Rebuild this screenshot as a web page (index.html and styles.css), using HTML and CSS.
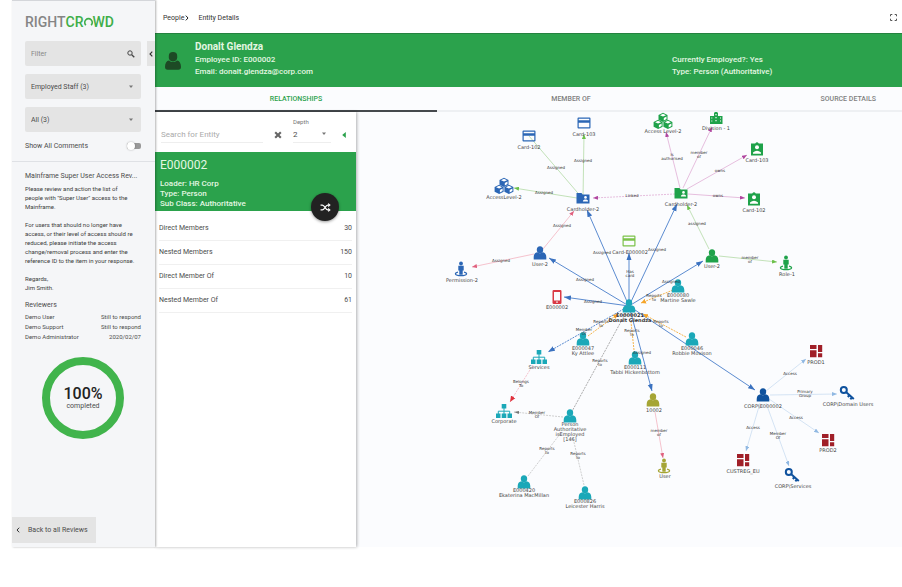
FILE: index.html
```html
<!DOCTYPE html>
<html lang="en">
<head>
    <meta charset="UTF-8">
    <meta name="viewport" content="width=device-width, initial-scale=1.0">
    <title>RightCrowd - Entity Details</title>
    <link rel="stylesheet" href="styles.css">
</head>
<body>
    <div id="app">
        <aside class="sidebar">
            <button class="collapse-btn" aria-label="Collapse sidebar">
                <svg width="4" height="6" viewBox="0 0 4 6"><path d="M3.3 .6L1 3l2.3 2.4" fill="none" stroke="#333" stroke-width="1.1"/></svg>
            </button>
            <div class="sidebar-top">
                <div class="logo">
                    <span class="logo-gray">RIGHT</span><span class="logo-green">CR</span><svg width="9" height="11" viewBox="0 0 9 11" aria-hidden="true"><path d="M1.800 8.200A3.700 3.900 0 1 1 7.200 8.200" fill="none" stroke="#3fae49" stroke-width="1.7"/></svg><span class="logo-green">WD</span>
                </div>
                <div class="field">
                    <input type="text" id="filter" placeholder="Filter" aria-label="Filter">
                    <svg width="8" height="8" viewBox="0 0 8 8"><circle cx="3" cy="3" r="2.2" fill="none" stroke="#444" stroke-width="1"/><path d="M4.7 4.7L7.3 7.3" stroke="#444" stroke-width="1.3"/></svg>
                </div>
                <div class="field">
                    <select id="staff" aria-label="Staff"><option>Employed Staff (3)</option></select>
                    <svg width="8" height="4" viewBox="0 0 8 4"><path d="M2 0.5h4L4 3z" fill="#777"/></svg>
                </div>
                <div class="field">
                    <select id="all" aria-label="Items"><option>All (3)</option></select>
                    <svg width="8" height="4" viewBox="0 0 8 4"><path d="M2 0.5h4L4 3z" fill="#777"/></svg>
                </div>
                <div class="toggle-row">
                    <label for="comments">Show All Comments</label>
                    <input type="checkbox" id="comments">
                </div>
            </div>
            <div class="review">
                <h2>Mainframe Super User Access Rev...</h2>
                <p>Please review and action the list of<br>people with "Super User" access to the<br>Mainframe.</p>
                <p>For users that should no longer have<br>access, or their level of access should re<br>reduced, please initiate the access<br>change/removal process and enter the<br>reference ID to the item in your response.</p>
                <p>Regards,<br>Jim Smith.</p>
                <h3>Reviewers</h3>
                <table class="reviewers">
                    <tr><td>Demo User</td><td>Still to respond</td></tr>
                    <tr><td>Demo Support</td><td>Still to respond</td></tr>
                    <tr><td>Demo Administrator</td><td>2020/02/07</td></tr>
                </table>
                <div class="progress">
                    <strong>100%</strong>
                    <span>completed</span>
                </div>
            </div>
            <button class="back-btn">
                <svg width="4" height="6" viewBox="0 0 4 6"><path d="M3.2 .7L1 3l2.2 2.3" fill="none" stroke="#333" stroke-width="1"/></svg>
                Back to all Reviews
            </button>
        </aside>

        <main>
            <nav class="breadcrumb">
                <a href="#">People</a>
                <svg width="4" height="6" viewBox="0 0 4 6"><path d="M.8 .6L3 3L.8 5.4" fill="none" stroke="#222" stroke-width="1"/></svg>
                <span>Entity Details</span>
                <button class="fullscreen-btn" aria-label="Full screen">
                    <svg width="7" height="7" viewBox="0 0 7 7"><path d="M.5 2.3V.5h1.8M4.7 .5h1.8v1.8M6.5 4.7v1.8H4.7M2.3 6.5H.5V4.7" fill="none" stroke="#555"/></svg>
                </button>
            </nav>

            <header class="entity-header">
                <svg width="16" height="18" viewBox="0 0 16 18" fill="#1d4a25"><rect x="3.8" y="0" width="8.4" height="9.4" rx="4.1"/><path d="M0 15c0-4 1.500-6.300 4-6.600 2.400 2 5.600 2 8 0 2.500.3 4 2.600 4 6.600 0 1.700-1 2.700-2.600 2.700H2.600C1 17.700 0 16.700 0 15z"/></svg>
                <div class="entity-main">
                    <h1>Donalt Glendza</h1>
                    <p>Employee ID: E000002</p>
                    <p>Email: donalt.glendza@corp.com</p>
                </div>
                <div class="entity-side">
                    <p>Currently Employed?: Yes</p>
                    <p>Type: Person (Authoritative)</p>
                </div>
            </header>

            <div class="tabs">
                <button class="tab active">RELATIONSHIPS</button>
                <button class="tab">MEMBER OF</button>
                <button class="tab last">SOURCE DETAILS</button>
            </div>

            <div class="content">
                <section class="panel">
                    <div class="search-row">
                        <input type="text" id="search" placeholder="Search for Entity" aria-label="Search for Entity">
                        <button aria-label="Clear">
                            <svg width="8" height="8" viewBox="0 0 8 8"><path d="M1.200 1.200L6.800 6.800M6.800 1.200L1.200 6.800" stroke="#666" stroke-width="2.1"/></svg>
                        </button>
                        <div class="depth">
                            <label for="depth">Depth</label>
                            <select id="depth"><option>2</option></select>
                            <svg width="6" height="4" viewBox="0 0 6 4"><path d="M1 .5h4L3 3z" fill="#777"/></svg>
                        </div>
                        <button aria-label="Hide panel">
                            <svg width="4" height="6" viewBox="0 0 4 6"><path d="M3.800 0v6L.2 3z" fill="#2ba24c"/></svg>
                        </button>
                    </div>
                    <div class="card-head">
                        <h2>E000002</h2>
                        <p>Loader: HR Corp</p>
                        <p>Type: Person</p>
                        <p>Sub Class: Authoritative</p>
                        <button class="fab" aria-label="Shuffle">
                            <svg width="11" height="9" viewBox="0 0 12 10" fill="none" stroke="#fff" stroke-width="1.4"><path d="M.5 2.300h2c2.700 0 3.300 5.400 6 5.400h1M.5 7.700h2c2.700 0 3.300-5.400 6-5.400h1"/><path d="M9 0l2.800 2.300L9 4.600zM9 5.400l2.800 2.300L9 10z" fill="#fff" stroke="none"/></svg>
                        </button>
                    </div>
                    <table class="counts">
                        <tr><td>Direct Members</td><td>30</td></tr>
                        <tr><td>Nested Members</td><td>150</td></tr>
                        <tr><td>Direct Member Of</td><td>10</td></tr>
                        <tr><td>Nested Member Of</td><td>61</td></tr>
                    </table>
                </section>

                <!-- Relationship graph -->
                <svg class="graph" viewBox="356 112 546 434">
                    <defs>
                        <marker id="a-blue" markerUnits="userSpaceOnUse" markerWidth="8" markerHeight="6" refX="7" refY="3" orient="auto"><path d="M0 .5L7 3L0 5.500z" fill="#3b72c0"/></marker>
                        <marker id="a-green" markerUnits="userSpaceOnUse" markerWidth="6" markerHeight="4" refX="5" refY="2" orient="auto"><path d="M0 0L5 2L0 4z" fill="#6cc04a"/></marker>
                        <marker id="a-pink" markerUnits="userSpaceOnUse" markerWidth="6" markerHeight="4" refX="5" refY="2" orient="auto"><path d="M0 0L5 2L0 4z" fill="#e0607e"/></marker>
                        <marker id="a-purple" markerUnits="userSpaceOnUse" markerWidth="6" markerHeight="4" refX="5" refY="2" orient="auto"><path d="M0 0L5 2L0 4z" fill="#b0459f"/></marker>
                        <marker id="a-orange" markerUnits="userSpaceOnUse" markerWidth="6" markerHeight="6" refX="5" refY="3" orient="auto"><path d="M0 .5L5 3L0 5.500z" fill="#f5a52a"/></marker>
                        <marker id="a-red" markerUnits="userSpaceOnUse" markerWidth="7" markerHeight="6" refX="6" refY="3" orient="auto"><path d="M0 .5L6 3L0 5.500z" fill="#e0303c"/></marker>
                        <marker id="a-gray" markerUnits="userSpaceOnUse" markerWidth="5" markerHeight="4" refX="5" refY="2" orient="auto"><path d="M0 .5L5 2L0 3.500z" fill="#777"/></marker>
                        <marker id="a-pale" markerUnits="userSpaceOnUse" markerWidth="6" markerHeight="4" refX="5" refY="2" orient="auto"><path d="M0 0L5 2L0 4z" fill="#90b8e2"/></marker>

                        <g id="person"><ellipse cy="-3.300" rx="3.200" ry="3.500"/><path d="M-6.300 6.500V4C-6.300 1-4.500-.5-2.600-.7C-1 .7 1 .7 2.600-.7C4.500-.5 6.300 1 6.300 4v2.500z"/></g>
                        <g id="card"><path fill-rule="evenodd" d="M-5.500-5.500h11q1 0 1 1v9q0 1-1 1h-11q-1 0-1-1v-9q0-1 1-1zM-5.300-4.300v1.500H5.300v-1.500zM-5.300-.3v4.600H5.300v-4.600z"/></g>
                        <g id="cube"><path d="M0-4.700L4.500-2.600v4.900L0 4.600L-4.500 2.300v-4.900z"/><path d="M0-3.700L3-2.300L0-.9L-3-2.300zM.8.400L3.500-.900v2.500L.8 3z" fill="#fff"/></g>
                        <g id="cubes"><use href="#cube" y="-3.500"/><use href="#cube" x="-4.900" y="3.500"/><use href="#cube" x="4.900" y="3.500"/></g>
                        <g id="folder"><path d="M-6.500-5h5l1.200 1.500h6.800V5.500h-13z"/><circle cx="2.500" cy="-.6" r="1.300" fill="#fff"/><path d="M-.1 3.400c0-2.600 5.200-2.600 5.200 0z" fill="#fff"/></g>
                        <g id="badge"><path d="M-6-5.500h4.200q1.800-2.600 3.600 0H6v12H-6z"/><circle cy="-1.800" r="2" fill="#fff"/><path d="M-4 4.800v-1.300q4-3.400 8 0v1.300z" fill="#fff"/></g>
                        <g id="role"><circle cy="-5.500" r="1.900"/><path d="M-2.700-3.300h5.400v4.800H1.700v4.300h-3.400V1.500h-1z"/><path d="M-3 3.200C-7 4-6.500 6.700 0 6.700S7 4 3 3.200" fill="none" stroke="currentColor" stroke-width="1.300"/></g>
                        <g id="sitemap"><path d="M-2.300-7h4.600v4.500h-4.600zM-8 2.500h4.500v4.500H-8zM-2.300 2.500h4.600v4.500h-4.600zM3.500 2.500H8v4.500H3.500z"/><path d="M0-3v6M-5.700 3V.2H5.700V3" fill="none" stroke="currentColor"/></g>
                        <g id="board"><path d="M-6-6h6.500v4H-6zM2-6h4.200v7H2zM-6-.7H.5v7H-6zM2 2.300h4.200v4H2z"/></g>
                        <g id="key" fill="none" stroke="currentColor"><circle cx="-3.200" cy="-3" r="3" stroke-width="2"/><path d="M-1-1L6.800 6M2.500 2L.8 4M5 4.500L3.300 6.300" stroke-width="2"/></g>
                        <g id="building"><path fill-rule="evenodd" d="M-6-2h4v-3l2-2l2 2v3H6.500V6H-6zM-4.700-.5v1h1v-1zM-4.700 2.500v1h1v-1zM-.6-4v1.200H.6V-4zM-.6-1v1.200H.6V-1zM-.6 2v1.200H.6V2zM4-.5v1h1v-1zM4 2.500v1h1v-1z"/></g>
                        <g id="phone"><path fill-rule="evenodd" d="M-3.300-7h6.600q1.200 0 1.200 1.200V5.800q0 1.200-1.200 1.200h-6.600q-1.200 0-1.200-1.200V-5.800q0-1.200 1.200-1.200zM-3-5v8.500H3V-5zM-.8 4.600v1.200H.8V4.600z"/></g>
                    </defs>

                    <g class="edges">
                        <path class="green" d="M583 199L529 136"/>
                        <path class="green" d="M583 199L584 134" marker-end="url(#a-green)"/>
                        <path class="green" d="M577 198L514 188" marker-end="url(#a-green)"/>
                        <path class="pink" d="M543 249L574 211" marker-end="url(#a-pink)"/>
                        <path class="pink" d="M534 254L472 267" marker-end="url(#a-pink)"/>
                        <path class="purple dashed" d="M675 194L593 198" marker-end="url(#a-purple)"/>
                        <path class="purple" d="M680 188L666 132" marker-end="url(#a-purple)"/>
                        <path class="purple" d="M683 188L712 127" marker-end="url(#a-purple)"/>
                        <path class="purple" d="M687 189L747 155" marker-end="url(#a-purple)"/>
                        <path class="purple" d="M688 194L745 198" marker-end="url(#a-purple)"/>
                        <path class="green" d="M709 249L687 205" marker-end="url(#a-green)"/>
                        <path class="green" d="M719 256L777 262" marker-end="url(#a-green)"/>
                        <path class="blue" d="M629 306L587 210" marker-end="url(#a-blue)"/>
                        <path class="blue" d="M629 306L677 204" marker-end="url(#a-blue)"/>
                        <path class="blue" d="M629 306V253" marker-end="url(#a-blue)"/>
                        <path class="blue" d="M629 306L549 258" marker-end="url(#a-blue)"/>
                        <path class="blue" d="M629 306L564 297" marker-end="url(#a-blue)"/>
                        <path class="blue" d="M629 306L703 261" marker-end="url(#a-blue)"/>
                        <path class="blue" d="M629 306L652 391" marker-end="url(#a-blue)"/>
                        <path class="blue" d="M629 306L755 390" marker-end="url(#a-blue)"/>
                        <path class="blue dashed" d="M629 306L548 352" marker-end="url(#a-blue)"/>
                        <path class="orange" d="M673 290L641 303" marker-end="url(#a-orange)"/>
                        <path class="orange" d="M686 337L643 314" marker-end="url(#a-orange)"/>
                        <path class="orange" d="M588 336L618 314" marker-end="url(#a-orange)"/>
                        <path class="orange" d="M634 350L631 322"/>
                        <path class="gray strong" d="M570 415L629 307"/>
                        <path class="gray" d="M563 417L514 412" marker-end="url(#a-gray)"/>
                        <path class="gray" d="M528 476L560 434M584 485L573 438"/>
                        <path class="pink dashed" d="M533 365L510 402" marker-end="url(#a-red)"/>
                        <path class="pink" d="M655 412L663 458" marker-end="url(#a-pink)"/>
                        <path class="pale" d="M766 391L806 359" marker-end="url(#a-pale)"/>
                        <path class="pale" d="M770 395L837 394" marker-end="url(#a-pale)"/>
                        <path class="pale" d="M769 399L819 433" marker-end="url(#a-pale)"/>
                        <path class="pale" d="M760 403L746 451" marker-end="url(#a-pale)"/>
                        <path class="pale" d="M766 403L789 466" marker-end="url(#a-pale)"/>
                    </g>

                    <g class="c-blue">
                        <use href="#card" x="529" y="136"/>
                        <use href="#card" x="584" y="123"/>
                        <use href="#cubes" x="504" y="186"/>
                        <use href="#folder" x="583" y="198"/>
                        <use href="#person" x="540" y="253"/>
                        <use href="#role" x="461" y="269"/>
                    </g>
                    <g class="c-green">
                        <use href="#cubes" x="663" y="121"/>
                        <use href="#building" x="716" y="118"/>
                        <use href="#badge" x="757" y="149"/>
                        <use href="#badge" x="754" y="199"/>
                        <use href="#folder" x="681" y="193"/>
                        <use href="#person" x="712" y="256"/>
                        <use href="#role" x="786" y="263"/>
                    </g>
                    <g class="c-lime"><use href="#card" x="629" y="241"/></g>
                    <g class="c-phone"><use href="#phone" x="557" y="297"/></g>
                    <g class="c-teal">
                        <use href="#person" x="629" y="306"/>
                        <use href="#person" x="678" y="286"/>
                        <use href="#person" x="692" y="339"/>
                        <use href="#person" x="583" y="339"/>
                        <use href="#person" x="635" y="358"/>
                        <use href="#sitemap" x="539" y="357"/>
                        <use href="#sitemap" x="504" y="411"/>
                        <use href="#person" x="570" y="416"/>
                        <use href="#person" x="524" y="482"/>
                        <use href="#person" x="585" y="493"/>
                    </g>
                    <g class="c-olive">
                        <use href="#person" x="653" y="400"/>
                        <use href="#role" x="664" y="466"/>
                    </g>
                    <g class="c-navy">
                        <use href="#person" x="763" y="395"/>
                        <use href="#key" x="847" y="393"/>
                        <use href="#key" x="792" y="475"/>
                    </g>
                    <g class="c-maroon">
                        <use href="#board" x="816" y="351"/>
                        <use href="#board" x="828" y="440"/>
                        <use href="#board" x="743" y="460"/>
                    </g>

                    <g class="node-labels">
                        <text x="529" y="149">Card-102</text>
                        <text x="584" y="136">Card-103</text>
                        <text x="504" y="199">AccessLevel-2</text>
                        <text x="583" y="211">Cardholder-2</text>
                        <text x="540" y="266">User-2</text>
                        <text x="462" y="282">Permission-2</text>
                        <text x="557" y="309">E000002</text>
                        <text x="663" y="133">Access Level-2</text>
                        <text x="716" y="130">Division - 1</text>
                        <text x="757" y="162">Card-103</text>
                        <text x="754" y="212">Card-102</text>
                        <text x="681" y="206">Cardholder-2</text>
                        <text x="712" y="268">User-2</text>
                        <text x="787" y="276">Role-1</text>
                        <text x="630" y="254">Card-E000002</text>
                        <text class="focus" x="630" y="317">E0000021</text>
                        <text class="focus" x="630" y="322">Donalt Glendza</text>
                        <text x="678" y="297">E000080</text>
                        <text x="678" y="302">Martine Sawle</text>
                        <text x="692" y="350">E000046</text>
                        <text x="692" y="355">Robbie Movison</text>
                        <text x="583" y="350">E000047</text>
                        <text x="583" y="355">Ky Attlee</text>
                        <text x="635" y="369">E000111</text>
                        <text x="635" y="374">Tabbi Hickenbottom</text>
                        <text x="539" y="369">Services</text>
                        <text x="504" y="423">Corporate</text>
                        <text x="570" y="426">Person</text>
                        <text x="570" y="431">Authoritative</text>
                        <text x="570" y="436">isEmployed</text>
                        <text x="570" y="441">[146]</text>
                        <text x="524" y="492">E000420</text>
                        <text x="524" y="497">Ekaterina MacMillan</text>
                        <text x="585" y="503">E000826</text>
                        <text x="585" y="508">Leicester Harris</text>
                        <text x="654" y="412">10002</text>
                        <text x="665" y="478">User</text>
                        <text x="763" y="408">CORP\E000002</text>
                        <text x="816" y="364">PROD1</text>
                        <text x="848" y="406">CORP\Domain Users</text>
                        <text x="828" y="452">PROD2</text>
                        <text x="743" y="473">CUSTREG_EU</text>
                        <text x="793" y="488">CORP\Services</text>
                    </g>
                    <g class="edge-labels">
                        <text x="556" y="169">Assigned</text>
                        <text x="583" y="162">Assigned</text>
                        <text x="544" y="194">Assigned</text>
                        <text x="562" y="227">Assigned</text>
                        <text x="501" y="262">Assigned</text>
                        <text x="632" y="197">Linked</text>
                        <text x="672" y="156">is</text>
                        <text x="672" y="160">authorised</text>
                        <text x="699" y="154">member</text>
                        <text x="699" y="158">of</text>
                        <text x="720" y="172">owns</text>
                        <text x="718" y="197">owns</text>
                        <text x="697" y="225">assigned</text>
                        <text x="750" y="259">member</text>
                        <text x="750" y="263">of</text>
                        <text x="602" y="254">Assigned</text>
                        <text x="657" y="251">Assigned</text>
                        <text x="630" y="273">Has</text>
                        <text x="630" y="277">card</text>
                        <text x="585" y="281">Assigned</text>
                        <text x="593" y="303">Assigned</text>
                        <text x="671" y="283">Assigned</text>
                        <text x="654" y="297">Reports</text>
                        <text x="654" y="301">to</text>
                        <text x="661" y="323">Reports</text>
                        <text x="661" y="327">to</text>
                        <text x="601" y="323">Reports</text>
                        <text x="601" y="327">to</text>
                        <text x="632" y="332">Reports</text>
                        <text x="632" y="336">to</text>
                        <text x="584" y="331">Member</text>
                        <text x="584" y="335">Of</text>
                        <text x="642" y="354">Assigned</text>
                        <text x="600" y="362">Reports</text>
                        <text x="600" y="366">to</text>
                        <text x="521" y="383">Belongs</text>
                        <text x="521" y="387">To</text>
                        <text x="537" y="414">Member</text>
                        <text x="537" y="418">Of</text>
                        <text x="547" y="450">Reports</text>
                        <text x="547" y="454">to</text>
                        <text x="578" y="455">Reports</text>
                        <text x="578" y="459">to</text>
                        <text x="659" y="432">member</text>
                        <text x="659" y="436">of</text>
                        <text x="790" y="375">Access</text>
                        <text x="805" y="393">Primary</text>
                        <text x="805" y="397">Group</text>
                        <text x="796" y="419">Access</text>
                        <text x="753" y="429">Access</text>
                        <text x="778" y="435">Member</text>
                        <text x="778" y="439">Of</text>
                    </g>
                </svg>
            </div>
        </main>
    </div>
</body>
</html>
```
FILE: styles.css
```css
* {
    box-sizing: border-box;
}
body {
    font-family: Roboto, "Liberation Sans", sans-serif;
    font-size: 7px;
    margin: 0;
    padding: 0 0 40px 12px;
    color: #4c4c4c;
    background: #fff;
}
h1, h2, h3, p {
    margin: 0;
    font-weight: 400;
}
button, input, select {
    font: inherit;
    color: inherit;
    padding: 0;
    border: none;
    border-radius: 0;
    background: none;
    outline: none;
}
button {
    cursor: pointer;
}
select {
    appearance: none;
}
svg {
    display: block;
    flex: none;
}
table {
    width: 100%;
    border-collapse: collapse;
}
td {
    padding: 0;
}
td:last-child {
    text-align: right;
}
#app {
    display: grid;
    grid-template-columns: 143px 1fr;
    min-height: calc(100vh - 40px);
}

/* Sidebar */
.sidebar {
    position: relative;
    z-index: 2;
    display: flex;
    flex-direction: column;
    background: #f5f6f8;
    border-top: 1px solid #d4d6da;
    box-shadow: 1px 0 2px rgba(0, 0, 0, 0.3);
}
.sidebar-top {
    display: flex;
    flex-direction: column;
    gap: 8px;
    padding: 14px 14px 9px 13px;
    border-bottom: 1px solid #dfe1e5;
}
.logo {
    display: flex;
    align-items: center;
    height: 14px;
    margin-bottom: 4px;
    font-size: 14px;
    font-weight: 500;
}
.logo-gray {
    color: #858585;
}
.logo-green {
    color: #3fae49;
}
.field {
    display: flex;
    align-items: center;
    height: 25px;
    padding: 0 6px;
    background: #e4e4e4;
    border-radius: 2px;
}
.field input,
.field select {
    flex: 1;
    min-width: 0;
    height: 25px;
}
.field input::placeholder {
    color: #888;
    opacity: 1;
}
.toggle-row {
    display: flex;
    align-items: center;
    justify-content: space-between;
    height: 12px;
}
.toggle-row input {
    appearance: none;
    display: flex;
    align-items: center;
    width: 14px;
    height: 6px;
    margin: 0;
    border-radius: 2px;
    background: #999;
}
.toggle-row input::before {
    content: "";
    width: 8px;
    height: 8px;
    border-radius: 50%;
    background: #fff;
    box-shadow: 0 0 2px rgba(0, 0, 0, 0.3);
}
.collapse-btn {
    position: absolute;
    top: 40px;
    right: 0;
    display: flex;
    align-items: center;
    justify-content: center;
    width: 8px;
    height: 25px;
    background: #e4e4e4;
}
.review {
    padding: 8px 8px 0 13px;
    font-size: 6px;
    line-height: 9px;
}
.review h2,
.review h3 {
    font-size: 7px;
    line-height: 12px;
}
.review h2 {
    margin-bottom: 2px;
    white-space: nowrap;
}
.review p {
    margin-bottom: 9px;
    color: #3c3c3c;
}
.review h3 {
    margin-top: -2px;
    margin-bottom: 1px;
}
.reviewers {
    width: calc(100% - 6px);
    line-height: 10px;
}
.progress {
    display: flex;
    flex-direction: column;
    align-items: center;
    justify-content: center;
    width: 82px;
    height: 82px;
    margin: 15px 0 0 17px;
    border: 8px solid #41b44c;
    border-radius: 50%;
    font-size: 7px;
}
.progress strong {
    font-size: 16px;
    font-weight: 500;
    line-height: 16px;
    color: #222;
}
.back-btn {
    display: flex;
    align-items: center;
    gap: 8px;
    align-self: flex-start;
    height: 26px;
    margin-top: auto;
    margin-bottom: 4px;
    padding: 0 8px 0 4px;
    background: #e4e4e4;
}

/* Top bar and entity header */
main {
    display: flex;
    flex-direction: column;
    min-width: 0;
    background: #fbfcfe;
}
.breadcrumb {
    display: flex;
    align-items: center;
    height: 33px;
    padding: 2px 5px 0 8px;
    background: #fff;
    color: #333;
}
.breadcrumb a {
    color: inherit;
    text-decoration: none;
    margin-right: 1px;
}
.breadcrumb span {
    margin-left: 9px;
}
.fullscreen-btn {
    margin-left: auto;
}
.entity-header {
    display: flex;
    align-items: center;
    height: 54px;
    padding-left: 10px;
    background: #2ba24c;
    border-top: 1px solid #25823f;
    color: #e4f7e2;
    font-size: 8px;
    line-height: 12px;
}
.entity-header p {
    font-weight: 500;
}
.entity-header h1 {
    font-size: 10px;
    font-weight: 700;
    line-height: 14px;
}
.entity-main {
    margin-left: 14px;
    padding-bottom: 3px;
}
.entity-side {
    width: 230px;
    margin-left: auto;
    padding-top: 11px;
}
.tabs {
    display: grid;
    grid-template-columns: 282fr 268fr 197fr;
    height: 25px;
}
.tab {
    border-bottom: 2px solid #eef0f3;
    color: #808080;
    font-weight: 500;
}
.tab.active {
    border-bottom-color: #45494d;
    color: #2ba24c;
}
.tab.last {
    padding-right: 26px;
    text-align: right;
}

/* Left panel */
.content {
    display: flex;
    flex: 1;
}
.panel {
    flex: 0 0 201px;
    min-width: 0;
    background: #fff;
    box-shadow: 1px 0 3px rgba(0, 0, 0, 0.3);
}
.search-row {
    display: flex;
    align-items: flex-end;
    height: 40px;
    padding: 0 10px 9px 6px;
    font-size: 8px;
}
.search-row input {
    flex: 1;
    width: 0;
    height: 17px;
    border-bottom: 1px solid #eee;
}
.search-row input::placeholder {
    color: #aaa;
    opacity: 1;
}
.search-row button {
    display: flex;
    align-items: center;
    height: 17px;
    margin-left: 11px;
}
.depth {
    position: relative;
    width: 38px;
    margin-left: 11px;
    border-bottom: 1px solid #eee;
}
.depth label {
    display: block;
    font-size: 6px;
    line-height: 8px;
    color: #777;
}
.depth select {
    display: block;
    width: 100%;
    height: 16px;
}
.depth svg {
    position: absolute;
    right: 4px;
    bottom: 6px;
    pointer-events: none;
}
.card-head {
    position: relative;
    height: 59px;
    padding: 4px 5px;
    background: #2ba24c;
    color: #e4f7e2;
    font-size: 8px;
    line-height: 10px;
}
.card-head h2 {
    margin-bottom: 5px;
    font-size: 12px;
    line-height: 18px;
}
.card-head p {
    font-weight: 500;
}
.fab {
    position: absolute;
    right: 17px;
    bottom: -10px;
    display: flex;
    align-items: center;
    justify-content: center;
    width: 28px;
    height: 28px;
    border-radius: 50%;
    background: #222;
    box-shadow: 0 1px 3px rgba(0, 0, 0, 0.4);
}
.counts {
    width: calc(100% - 8px);
    margin: 5px 4px 0;
}
.counts td {
    height: 24px;
    border-bottom: 1px solid #f0f0f0;
}

/* Graph */
.graph {
    flex: 1;
    min-width: 0;
    align-self: flex-start;
    font-family: "DejaVu Sans", sans-serif;
}
.edges path {
    fill: none;
    stroke-width: 0.7px;
}
.edges .dashed {
    stroke-dasharray: 2 1;
}
.edges .blue {
    stroke: #5b8bd0;
    stroke-width: 1px;
}
.edges .green {
    stroke: #a9d69a;
}
.edges .pink {
    stroke: #f2a9b8;
}
.edges .purple {
    stroke: #dca3d0;
}
.edges .orange {
    stroke: #f5b54e;
    stroke-width: 1px;
    stroke-dasharray: 2 1;
}
.edges .gray {
    stroke: #bbb;
    stroke-dasharray: 2 1;
}
.edges .gray.strong {
    stroke: #888;
}
.edges .pale {
    stroke: #c3d8ef;
}
.c-blue { fill: #2b66b5; color: #2b66b5; }
.c-green { fill: #1fa24a; color: #1fa24a; }
.c-lime { fill: #7cc24a; color: #7cc24a; }
.c-phone { fill: #d93a45; color: #d93a45; }
.c-teal { fill: #1ba8b8; color: #1ba8b8; }
.c-olive { fill: #a5a535; color: #a5a535; }
.c-navy { fill: #0f529e; color: #0f529e; }
.c-maroon { fill: #a01f28; color: #a01f28; }
.node-labels text {
    font-size: 5px;
    text-anchor: middle;
    fill: #444;
}
.node-labels .focus {
    font-weight: 700;
    fill: #333;
}
.edge-labels text {
    font-size: 4px;
    text-anchor: middle;
    fill: #333;
}
```
